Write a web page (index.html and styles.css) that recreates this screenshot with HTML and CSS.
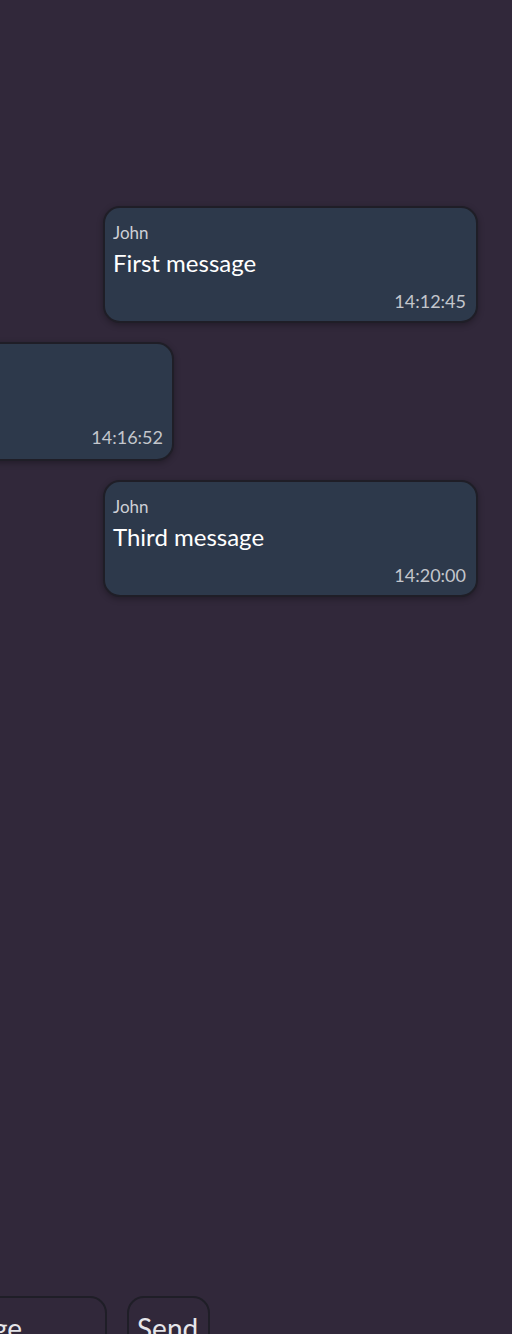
FILE: index.html
```html
<!DOCTYPE html>
<html>
<head>
<meta charset="utf-8">
<link rel="stylesheet" href="styles.css">
</head>
<body>
<div class="app">
  <div class="messages">
    <div class="msg right">
      <div class="name">John</div>
      <div class="text">First message</div>
      <div class="time">14:12:45</div>
    </div>
    <div class="msg left">
      <div class="name">Jane</div>
      <div class="text">Second message</div>
      <div class="time">14:16:52</div>
    </div>
    <div class="msg right">
      <div class="name">John</div>
      <div class="text">Third message</div>
      <div class="time">14:20:00</div>
    </div>
  </div>
  <div class="composer">
    <div class="input">Type a message</div>
    <div class="send">Send</div>
  </div>
</div>
</body>
</html>
```
FILE: styles.css
```css
html, body {
  margin: 0;
  padding: 0;
  background: #31283a;
}
.app {
  width: 512px;
  height: 1334px;
  overflow: hidden;
  font-family: "Lato", "Noto Sans", sans-serif;
  color: #fff;
}
.messages {
  height: 1296px;
  box-sizing: border-box;
  padding-top: 206px;
  display: flex;
  flex-direction: column;
  gap: 19px;
}
.msg {
  width: 375px;
  box-sizing: border-box;
  padding: 14px 10px 9px 8px;
  border: 2px solid #1f1e27;
  border-radius: 17px;
  background: #2d394b;
  box-shadow: 0 2px 6px rgba(0, 0, 0, 0.3);
  display: flex;
  flex-direction: column;
}
.msg.right { margin-left: 103px; }
.msg.left { margin-left: -201px; padding-right: 9px; padding-bottom: 11px; }
.name {
  font-size: 17px;
  line-height: 22px;
  color: #cdd0d6;
}
.text {
  margin-top: 5px;
  font-size: 24px;
  line-height: 28px;
  color: #ffffff;
}
.time {
  margin-top: 13px;
  font-size: 18px;
  line-height: 22px;
  text-align: right;
  color: #c3c6cc;
}
.composer {
  display: flex;
  gap: 20px;
  align-items: flex-start;
}
.input, .send {
  box-sizing: border-box;
  height: 62px;
  border: 2px solid #1f1e27;
  border-radius: 17px;
  font-size: 28px;
  line-height: 34px;
  padding: 13px 8px;
  color: #e6e6ea;
  white-space: nowrap;
  overflow: hidden;
}
.input {
  width: 300px;
  margin-left: -193px;
  text-align: right;
  padding-right: 83px;
}
.send {
  width: 83px;
}
```
